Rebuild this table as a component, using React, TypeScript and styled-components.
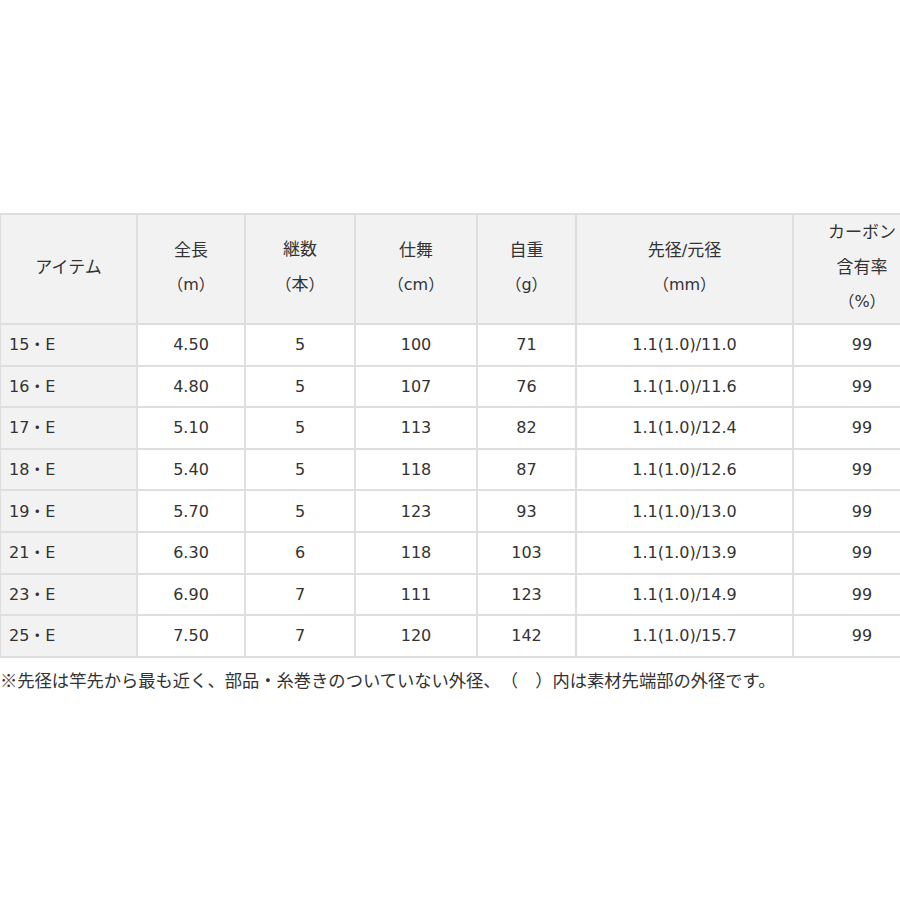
import React from "react";
import styled, { createGlobalStyle } from "styled-components";

const GlobalStyle = createGlobalStyle`
  html, body {
    margin: 0;
    padding: 0;
    background: #ffffff;
    overflow: hidden;
  }
`;

type Row = {
  item: string;
  length: string;
  pieces: string;
  closed: string;
  weight: string;
  diameter: string;
  carbon: string;
};

const rows: Row[] = [
  { item: "15", length: "4.50", pieces: "5", closed: "100", weight: "71", diameter: "1.1(1.0)/11.0", carbon: "99" },
  { item: "16", length: "4.80", pieces: "5", closed: "107", weight: "76", diameter: "1.1(1.0)/11.6", carbon: "99" },
  { item: "17", length: "5.10", pieces: "5", closed: "113", weight: "82", diameter: "1.1(1.0)/12.4", carbon: "99" },
  { item: "18", length: "5.40", pieces: "5", closed: "118", weight: "87", diameter: "1.1(1.0)/12.6", carbon: "99" },
  { item: "19", length: "5.70", pieces: "5", closed: "123", weight: "93", diameter: "1.1(1.0)/13.0", carbon: "99" },
  { item: "21", length: "6.30", pieces: "6", closed: "118", weight: "103", diameter: "1.1(1.0)/13.9", carbon: "99" },
  { item: "23", length: "6.90", pieces: "7", closed: "111", weight: "123", diameter: "1.1(1.0)/14.9", carbon: "99" },
  { item: "25", length: "7.50", pieces: "7", closed: "120", weight: "142", diameter: "1.1(1.0)/15.7", carbon: "99" },
];

const colWidths = [137, 108, 110, 122, 99, 217, 138];

const App = () => {
  return (
    <Page>
      <GlobalStyle />
      <SpecTable>
        <colgroup>
          {colWidths.map((w, i) => (
            <col key={i} style={{ width: w }} />
          ))}
        </colgroup>
        <thead>
          <HeadRow>
            <HeadCell><Jp>アイテム</Jp></HeadCell>
            <HeadCell><Jp>全長</Jp><br />（m）</HeadCell>
            <HeadCell><Jp>継数</Jp><br />（<Jp>本</Jp>）</HeadCell>
            <HeadCell><Jp>仕舞</Jp><br />（cm）</HeadCell>
            <HeadCell><Jp>自重</Jp><br />（g）</HeadCell>
            <HeadCell><Jp>先径</Jp>/<Jp>元径</Jp><br />（mm）</HeadCell>
            <HeadCell><Jp>カーボン</Jp><br /><Jp>含有率</Jp><br />（%）</HeadCell>
          </HeadRow>
        </thead>
        <tbody>
          {rows.map((r) => (
            <BodyRow key={r.item}>
              <ItemCell>{r.item}・E</ItemCell>
              <Cell>{r.length}</Cell>
              <Cell>{r.pieces}</Cell>
              <Cell>{r.closed}</Cell>
              <Cell>{r.weight}</Cell>
              <Cell>{r.diameter}</Cell>
              <Cell>{r.carbon}</Cell>
            </BodyRow>
          ))}
        </tbody>
      </SpecTable>
      <Note>※先径は竿先から最も近く、部品・糸巻きのついていない外径、（　）内は素材先端部の外径です。</Note>
    </Page>
  );
};

export default App;

const Page = styled.div`
  width: 900px;
  height: 900px;
  overflow: hidden;
  padding-top: 213px;
  box-sizing: border-box;
  font-family: "DejaVu Sans", "Noto Sans CJK JP", sans-serif;
  font-size: 16px;
  color: #333333;
  text-spacing-trim: space-all;
`;

const Jp = styled.span`
  font-size: 17px;
`;

const SpecTable = styled.table`
  border-collapse: collapse;
  table-layout: fixed;
  width: 931px;
  margin-left: -1px;
`;

const HeadRow = styled.tr`
  height: 110px;
`;

const BodyRow = styled.tr`
  height: 41.6px;
`;

const HeadCell = styled.th`
  border: 2px solid #dedede;
  background: #f2f2f2;
  font-weight: normal;
  line-height: 34px;
  text-align: center;
  vertical-align: middle;
  padding: 0 0 4px;
`;

const Cell = styled.td`
  border: 2px solid #dedede;
  background: #ffffff;
  line-height: 35px;
  text-align: center;
  vertical-align: middle;
  padding: 0;
`;

const ItemCell = styled(Cell)`
  background: #f2f2f2;
  text-align: left;
  padding-left: 8px;
`;

const Note = styled.p`
  margin: 7px 0 0;
  font-family: "Noto Sans CJK JP", sans-serif;
  font-size: 17.3px;
  line-height: 30px;
  white-space: nowrap;
`;
